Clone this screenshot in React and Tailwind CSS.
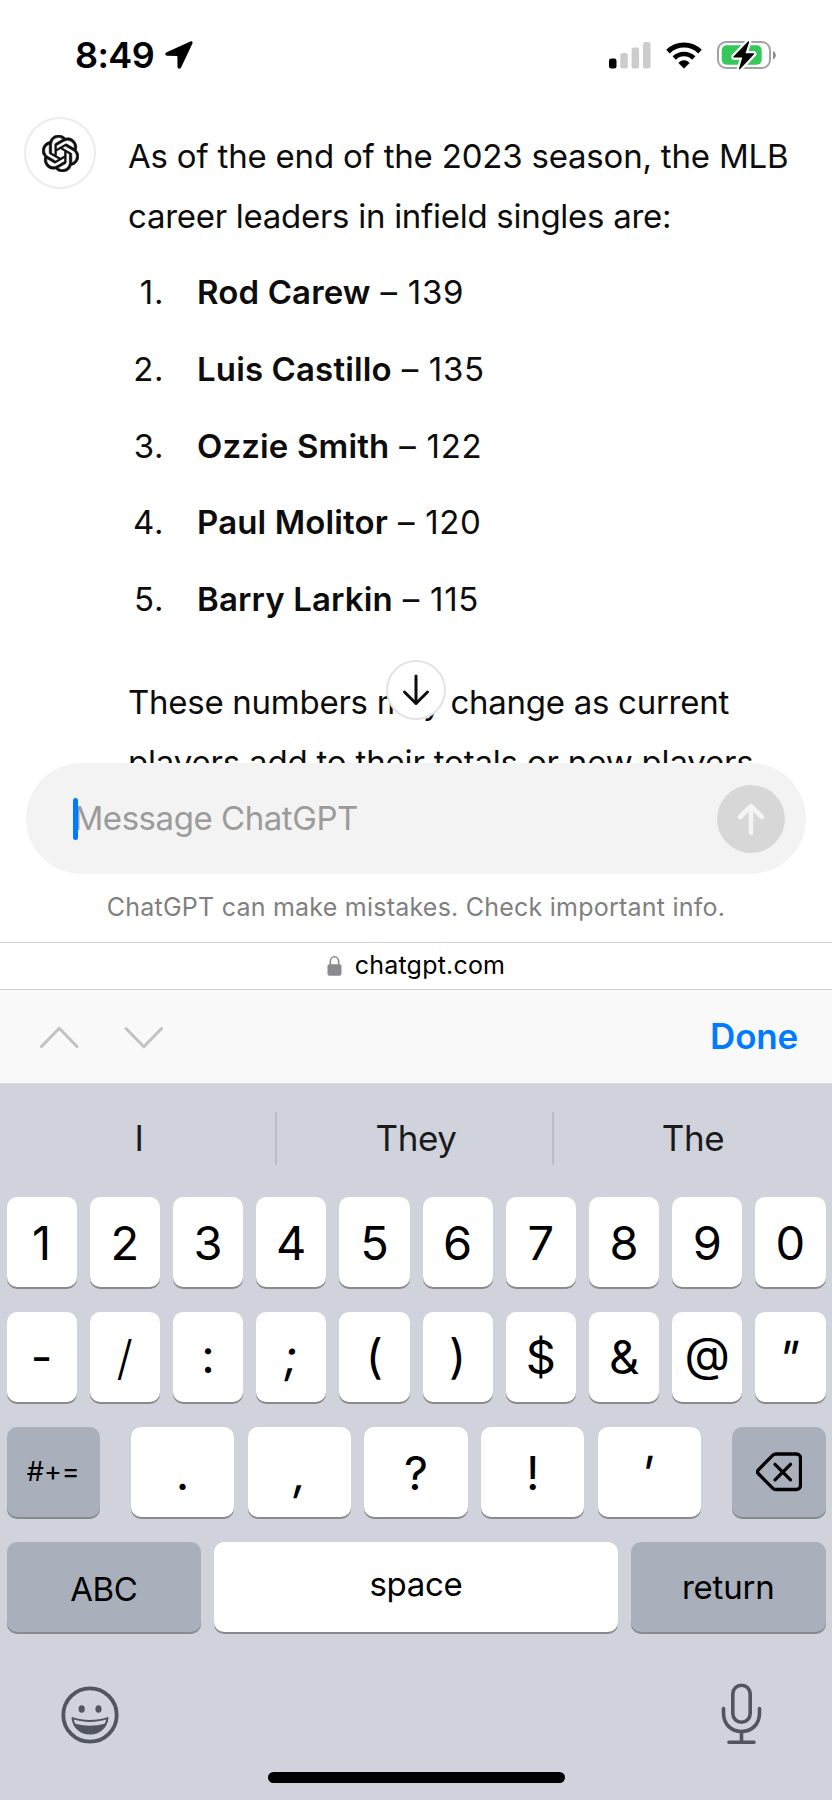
import { SiOpenai } from "react-icons/si";

const leaders = [
  { name: "Rod Carew", singles: 139 },
  { name: "Luis Castillo", singles: 135 },
  { name: "Ozzie Smith", singles: 122 },
  { name: "Paul Molitor", singles: 120 },
  { name: "Barry Larkin", singles: 115 },
];

const digits = ["1", "2", "3", "4", "5", "6", "7", "8", "9", "0"];
const symbols = ["-", "/", ":", ";", "(", ")", "$", "&", "@", '"'];
const punctuation = [".", ",", "?", "!", "'"];

const glyphStyles = {
  "-": "-translate-y-px",
  "/": "font-light",
  ":": "-translate-y-0.5",
  ";": "-translate-y-0.5 -skew-x-6",
  "(": "-translate-y-0.5 text-[44px]",
  ")": "-translate-y-0.5 text-[44px]",
  $: "-translate-y-px",
  "&": "-translate-y-px",
  "@": "-translate-y-1 text-[44px]",
  '"': "-skew-x-12 text-[42px] tracking-[1px] -translate-x-px",
  ",": "-skew-x-6",
  "'": "-skew-x-12 text-[42px] -translate-x-0.5",
};

function Key({ children, className = "", dark = false }) {
  return (
    <button
      className={`h-[90px] rounded-[10px] flex items-center justify-center shadow-[0_2px_0_#898a8d] ${
        dark ? "bg-[#a9afbb]" : "bg-white"
      } ${className}`}
    >
      {children}
    </button>
  );
}

function Glyph({ char }) {
  return <span className={`text-[47px] leading-none ${glyphStyles[char] || ""}`}>{char}</span>;
}

function StatusBar() {
  return (
    <header className="h-[110px] shrink-0 flex items-start justify-between pl-[75px] pr-[56px] pt-[35px]">
      <div className="flex items-center gap-[11px] h-10">
        <span className="text-[36px] font-semibold leading-10 tracking-[-0.6px]">8:49</span>
        <svg width="28" height="28" viewBox="0 0 28 28" fill="black">
          <path d="M25.3.4 1.7 11.2C-.6 12.3 0 14.7 2.2 14.8l9.6.1c.4 0 .6.2.6.6l.1 10c0 2.600 2.700 3 3.700.8L27.300 2.700C28 1 27-.3 25.300.4Z" />
        </svg>
      </div>
      <div className="flex items-center h-10">
        <svg width="42" height="27" viewBox="0 0 42 27">
          <rect x="0" y="16.500" width="7.500" height="10" rx="2.200" fill="black" />
          <rect x="11.300" y="11" width="7.500" height="15.500" rx="2.200" fill="#cccccc" />
          <rect x="22.600" y="5.500" width="7.500" height="21" rx="2.200" fill="#cccccc" />
          <rect x="34" y="0" width="7.500" height="26.500" rx="2.200" fill="#cccccc" />
        </svg>
        <svg className="ml-[15px]" width="36" height="27" viewBox="0 0 36 27">
          <path d="M2 9.600C11 .9 25 .9 34 9.600" fill="none" stroke="black" strokeWidth="5" />
          <path d="M8.200 16C13.800 10.700 22.200 10.700 27.800 16" fill="none" stroke="black" strokeWidth="4.600" />
          <path d="M18 26.300 12.700 21C15.800 17.800 20.200 17.800 23.300 21Z" fill="black" stroke="black" strokeWidth=".6" strokeLinejoin="round" />
        </svg>
        <svg className="ml-[15px]" width="59" height="30" viewBox="0 0 59 30">
          <rect x="1" y="2" width="52" height="26" rx="8" fill="none" stroke="#a3a3a3" strokeWidth="2" />
          <path d="M56 11v8.500c1.700-.8 2.800-2.400 2.800-4.250S57.700 11.800 56 11Z" fill="#8a8a8a" />
          <rect x="4.700" y="5.300" width="40" height="19.500" rx="5" fill="#34c759" />
          <path d="M31 1.500 16.500 16.500c-.4.500-.1 1 .5 1h8.300l-3.300 11c-.2 1 .4 1.300 1.200.6L37 14.300c.4-.5.100-1-.5-1h-8l3.600-11c.2-1-.5-1.500-1.100-.8Z" fill="black" stroke="white" strokeWidth="4.500" />
          <path d="M31 1.500 16.500 16.500c-.4.500-.1 1 .5 1h8.300l-3.300 11c-.2 1 .4 1.300 1.200.6L37 14.300c.4-.5.100-1-.5-1h-8l3.600-11c.2-1-.5-1.500-1.100-.8Z" fill="black" />
        </svg>
      </div>
    </header>
  );
}

function Conversation() {
  return (
    <main className="relative h-[653px] shrink-0 overflow-hidden flex pl-6 text-[33px] leading-[60px] text-[#0d0d0d]">
      <div className="w-[72px] h-[72px] mt-[7px] shrink-0 rounded-full border-2 border-[#ececec] flex items-center justify-center">
        <SiOpenai size={37} className="stroke-[#0d0d0d] stroke-[0.4]" />
      </div>
      <div className="ml-8 pt-4 whitespace-nowrap">
        <p>
          <span className="tracking-[-0.2px]">As of the end of the 2023 season, the MLB</span>
          <br />
          <span className="tracking-[-0.28px]">career leaders in infield singles are:</span>
        </p>
        <ol className="mt-[16px] flex flex-col gap-[16.8px]">
          {leaders.map((player, i) => (
            <li key={player.name} className="flex">
              <span className="w-[36px] text-right tracking-[0.6px]">{i + 1}.</span>
              <span className="ml-[33px] tracking-[0.7px]">
                <strong className="font-semibold tracking-[0.13px]">{player.name}</strong> – {player.singles}
              </span>
            </li>
          ))}
        </ol>
        <p className="mt-[43px]">
          <span className="tracking-[-0.27px]">These numbers may change as current</span>
          <br />
          <span className="tracking-[-0.18px]">players add to their totals or new players</span>
        </p>
      </div>

      {/* Scroll to bottom */}
      <button className="absolute left-[386px] top-[550px] w-[60px] h-[60px] rounded-full bg-white border-2 border-[#e3e3e3] flex items-center justify-center">
        <svg width="28" height="32" viewBox="0 0 28 32" fill="none" stroke="#0d0d0d" strokeWidth="3" strokeLinecap="round" strokeLinejoin="round">
          <path d="M14 2v27.500M2.500 18 14 29.500 25.500 18" />
        </svg>
      </button>
    </main>
  );
}

function Composer() {
  return (
    <section className="h-[179px] shrink-0 px-[26px]">
      <div className="h-[111px] rounded-full bg-[#f3f3f3] flex items-center pl-[46.500px] pr-[21px]">
        <span className="relative z-10 w-[5px] h-[42px] rounded-full bg-[#007aff]" />
        <span className="-ml-[4px] flex-1 pt-px text-[33px] tracking-[-0.45px] text-[#9b9b9b]">Message ChatGPT</span>
        <button className="w-[68px] h-[68px] rounded-full bg-[#d7d7d7] flex items-center justify-center">
          <svg width="28" height="34" viewBox="0 0 28 34" fill="none" stroke="#f4f4f4" strokeWidth="4.600" strokeLinecap="round" strokeLinejoin="round">
            <path d="M14 31V4M3 15 14 4l11 11" />
          </svg>
        </button>
      </div>
      <p className="mt-[15px] text-center text-[25px] leading-9 tracking-[0.23px] text-[#808080] whitespace-nowrap">
        ChatGPT can make mistakes. Check important info.
      </p>
    </section>
  );
}

function BrowserBar() {
  return (
    <>
      <div className="h-[48px] shrink-0 border-y border-[#d0d0d2] flex items-center justify-center gap-[13px] text-[25px] text-black">
        <svg width="15" height="20" viewBox="0 0 15 20">
          <path d="M3.300 9V5.500a4.200 4.700 0 0 1 8.400 0V9" fill="none" stroke="#8a8a8f" strokeWidth="1.600" />
          <rect x=".5" y="8.300" width="14" height="11.500" rx="2" fill="#8a8a8f" />
        </svg>
        <span className="tracking-[0.2px]">chatgpt.com</span>
      </div>
      <div className="h-[94px] shrink-0 bg-[#f9f9f9] border-b border-[#dcdcde] flex items-center pl-[39px] pr-[34px]">
        <svg width="40" height="24" viewBox="0 0 40 24" fill="none" stroke="#c2c2c3" strokeWidth="3" strokeLinecap="round" strokeLinejoin="round">
          <path d="M2.500 21.500 20.300 3.300 38 21.500" />
        </svg>
        <svg className="ml-[45px]" width="40" height="24" viewBox="0 0 40 24" fill="none" stroke="#c2c2c3" strokeWidth="3" strokeLinecap="round" strokeLinejoin="round">
          <path d="M2 3.500 19.800 21.700 37.500 3.500" />
        </svg>
        <span className="ml-auto text-[35px] font-semibold tracking-[-0.2px] text-[#007aff]">Done</span>
      </div>
    </>
  );
}

function Keyboard() {
  return (
    <section className="flex-1 bg-[#d0d3db] text-black flex flex-col">
      <div className="h-[113px] pb-[5px] flex items-center text-[35px] tracking-[-0.4px] text-[#1a1b1c]">
        <span className="w-[275px] pl-[3px] text-center">I</span>
        <span className="w-[2px] h-[53px] bg-[#bbbdc3]" />
        <span className="w-[275px] pl-[3px] text-center">They</span>
        <span className="w-[2px] h-[53px] bg-[#bbbdc3]" />
        <span className="flex-1 text-center">The</span>
      </div>

      <div className="flex flex-col gap-[25px] px-[6.500px]">
        <div className="flex gap-[13px]">
          {digits.map((char) => (
            <Key key={char} className="flex-1">
              <Glyph char={char} />
            </Key>
          ))}
        </div>
        <div className="flex gap-[13px]">
          {symbols.map((char) => (
            <Key key={char} className="flex-1">
              <Glyph char={char} />
            </Key>
          ))}
        </div>
        <div className="flex justify-between">
          <Key dark className="w-[93.500px]">
            <span className="text-[27px]">#+=</span>
          </Key>
          <div className="flex gap-[13.500px]">
            {punctuation.map((char) => (
              <Key key={char} className="w-[103.200px]">
                <Glyph char={char} />
              </Key>
            ))}
          </div>
          <Key dark className="w-[93.500px]">
            <svg width="46" height="40" viewBox="0 0 46 40" fill="none" stroke="black" strokeWidth="3.300" strokeLinecap="round" strokeLinejoin="round">
              <path d="M20 2h20.500a4 4 0 0 1 4 4v27.500a4 4 0 0 1-4 4H20c-1.400 0-2.500-.5-3.400-1.400L2.200 21.500c-1-1.100-1-2.300 0-3.400L16.600 3.400C17.500 2.500 18.600 2 20 2Z" />
              <path d="m19 12.300 15.500 15.500M34.500 12.300 19 27.800" />
            </svg>
          </Key>
        </div>
        <div className="flex gap-[13px] text-[33px]">
          <Key dark className="w-[194.500px]">
            <span className="translate-y-[3px] tracking-[-0.5px]">ABC</span>
          </Key>
          <Key className="flex-1">
            <span className="-translate-y-[2px] tracking-[-0.3px]">space</span>
          </Key>
          <Key dark className="w-[194.500px]">
            <span className="translate-y-px tracking-[-0.2px]">return</span>
          </Key>
        </div>
      </div>

      <div className="mt-[50px] flex justify-between pl-[61px] pr-[70px]">
        <svg className="mt-[4px]" width="58" height="58" viewBox="0 0 58 58">
          <circle cx="29" cy="29" r="26.700" fill="none" stroke="#50555e" strokeWidth="3.800" />
          <ellipse cx="20.700" cy="23" rx="3.100" ry="3.800" fill="#50555e" />
          <ellipse cx="37.500" cy="23" rx="3.100" ry="3.800" fill="#50555e" />
          <path d="M10.500 32.200c-.1-.9.500-1.300 1.300-1 11 3.700 23.400 3.700 34.400 0 .8-.3 1.400.1 1.300 1C46.300 42 38.800 48.500 29 48.500S11.700 42 10.500 32.200Z" fill="#50555e" />
          <path d="M12.800 33.600c10.200 3.200 22.200 3.200 32.400 0-.3 1.800-.8 3-1.600 4.200-9.200 2.500-20 2.500-29.200 0-.8-1.200-1.300-2.400-1.600-4.200Z" fill="#d0d3db" />
        </svg>
        <svg className="mt-px" width="41" height="62" viewBox="0 0 41 62" fill="none" stroke="#50555e" strokeWidth="3.600" strokeLinecap="round">
          <rect x="11.800" y="2.300" width="17.400" height="37" rx="8.700" />
          <path d="M2.500 25.500v4.500c0 11 7.500 18.500 18 18.500s18-7.500 18-18.500v-4.500M20.500 48.500v10.800M8 59.300h25" />
        </svg>
      </div>

      <div className="mt-auto mb-[17px] mx-auto w-[297px] h-[11px] rounded-full bg-black" />
    </section>
  );
}

export default function App() {
  return (
    <div className="w-[832px] h-[1800px] flex flex-col bg-white overflow-hidden font-['Inter','Liberation_Sans',sans-serif]">
      <StatusBar />
      <Conversation />
      <Composer />
      <BrowserBar />
      <Keyboard />
    </div>
  );
}
